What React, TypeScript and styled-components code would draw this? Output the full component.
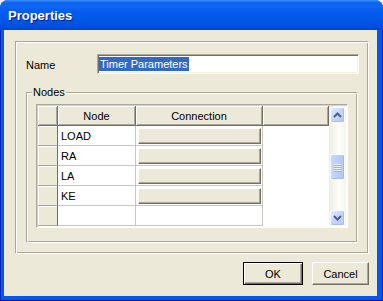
import React from 'react';
import styled, { createGlobalStyle } from 'styled-components';

const GlobalStyle = createGlobalStyle`
  html, body {
    margin: 0;
    padding: 0;
    background: #f4f1e2;
  }
  body {
    font-family: 'Liberation Sans', Arial, sans-serif;
    font-size: 11px;
    color: #000;
  }
  * {
    box-sizing: border-box;
  }
`;

const Window = styled.div`
  width: 383px;
  height: 301px;
  display: flex;
  flex-direction: column;
  background: #0554e6;
  border-radius: 8px 8px 0 0;
  overflow: hidden;
`;

const TitleBar = styled.div`
  height: 30px;
  flex: none;
  display: flex;
  align-items: center;
  padding: 1px 0 0 8px;
  background: linear-gradient(
    to bottom,
    #3d8ff8 0,
    #0a62ec 3px,
    #0f67f4 6px,
    #035cee 12px,
    #0057e8 20px,
    #0050de 26px,
    #0246cf 30px
  );
  color: #fff;
  font-weight: bold;
  font-size: 13px;
  text-shadow: 1px 1px 0 #0a1a8a;
`;

const Frame = styled.div`
  flex: 1;
  display: flex;
  padding: 0 6px 5px 4px;
  background: #0657ea;
  box-shadow: inset 1px 0 0 #0027b8, inset -1px 0 0 #0027b8, inset 0 -1px 0 #00138c;
`;

const Body = styled.div`
  flex: 1;
  display: flex;
  flex-direction: column;
  background: #ece9d8;
  padding: 11px 8px 11px 11px;
`;

const Etched = styled.div`
  border: 1px solid;
  border-color: #aca899 #fff #fff #aca899;
  box-shadow: inset 1px 1px 0 #fff, inset -1px -1px 0 #aca899;
`;

const Panel = styled(Etched)`
  width: 354px;
  height: 213px;
  padding: 12px 0 0 10px;
`;

const NameRow = styled.div`
  display: flex;
  align-items: center;
  height: 20px;
`;

const Label = styled.span`
  width: 71px;
  padding-top: 1px;
`;

const TextBox = styled.div`
  width: 262px;
  height: 20px;
  display: flex;
  align-items: center;
  background: #fff;
  border: 1px solid;
  border-color: #aca899 #fff #fff #aca899;
  box-shadow: inset 1px 1px 0 #716f64, inset -1px -1px 0 #f1efe2;
  padding-left: 1px;
`;

const Selected = styled.span`
  background: #316ac5;
  color: #fff;
  line-height: 14px;
  padding: 0 1px;
`;

const GroupBox = styled(Etched)`
  width: 332px;
  height: 151px;
  margin-top: 18px;
  padding-left: 9px;
`;

const GroupCaption = styled.div`
  width: fit-content;
  margin: -7px 0 0 -4px;
  padding: 0 1px;
  line-height: 13px;
  background: #ece9d8;
`;

const Grid = styled.div`
  width: 312px;
  height: 124px;
  margin-top: 5px;
  display: flex;
  background: #fff;
  border: 1px solid;
  border-color: #aca899 #fff #fff #aca899;
  box-shadow: inset 1px 1px 0 #d6d2c2;
  padding: 1px 1px 1px 1px;
`;

const Table = styled.div`
  display: grid;
  grid-template-columns: 20px 78px 127px 66px;
  grid-template-rows: repeat(6, 20px);
`;

const HeadCell = styled.div`
  display: flex;
  align-items: center;
  justify-content: center;
  background: #ece9d8;
  border-right: 1px solid #716f64;
  border-bottom: 1px solid #716f64;
  box-shadow: inset 1px 1px 0 #fff, inset -1px -1px 0 #aca899;
`;

const RowHead = styled.div`
  background: #ece9d8;
  border-right: 1px solid #716f64;
  border-bottom: 1px solid #aca899;
  box-shadow: inset 1px 1px 0 #fff;
`;

const Cell = styled.div`
  display: flex;
  align-items: center;
  padding-left: 3px;
  background: #fff;
  border-right: 1px solid #c9c7ba;
  border-bottom: 1px solid #c9c7ba;
`;

const ButtonCell = styled.div`
  padding: 2px 1px 1px 2px;
  background: #fff;
  border-right: 1px solid #c9c7ba;
  border-bottom: 1px solid #c9c7ba;
`;

const CellButton = styled.div`
  height: 100%;
  background: #ece9d8;
  border: 1px solid;
  border-color: #fff #716f64 #716f64 #fff;
  box-shadow: inset -1px -1px 0 #aca899;
`;

const Filler = styled.div`
  grid-column: 4;
  grid-row: 2 / span 5;
  background: #fff;
`;

const ScrollBar = styled.div`
  width: 17px;
  display: flex;
  flex-direction: column;
  padding: 1px 0 0 1px;
  background: linear-gradient(to right, #eeede5, #fdfdfa 60%, #f5f4ee);
`;

const ScrollButton = styled.div`
  width: 15px;
  height: 16px;
  flex: none;
  display: flex;
  align-items: center;
  justify-content: center;
  border: 1px solid #fbfcff;
  border-radius: 2px;
  background: linear-gradient(135deg, #e3ecfe 0%, #c6d7fc 45%, #b5c9f6 100%);
  box-shadow: inset -1px -1px 0 #a8bdf0;
`;

const Track = styled.div`
  flex: 1;
  display: flex;
  flex-direction: column;
`;

const Thumb = styled.div<{ $offset: number }>`
  width: 15px;
  height: 26px;
  margin-top: ${(p) => p.$offset}px;
  display: flex;
  flex-direction: column;
  align-items: center;
  justify-content: center;
  gap: 1px;
  border: 1px solid #fbfcff;
  border-radius: 2px;
  background: linear-gradient(to right, #c9dafd 0%, #bccffb 50%, #b2c7f7 100%);
  box-shadow: inset -1px -1px 0 #a3b9ee;
`;

const Grip = styled.div`
  width: 7px;
  height: 1px;
  background: #eef4fe;
  box-shadow: 0 1px 0 #8cb0f8;
`;

const ButtonRow = styled.div`
  display: flex;
  justify-content: flex-end;
  gap: 9px;
  margin-top: 8px;
`;

const DialogButton = styled.div<{ $default?: boolean; $width: number }>`
  width: ${(p) => p.$width}px;
  height: 23px;
  display: flex;
  align-items: center;
  justify-content: center;
  background: #ece9d8;
  border: 1px solid;
  border-color: ${(p) => (p.$default ? '#000' : '#fff #716f64 #716f64 #fff')};
  box-shadow: ${(p) =>
    p.$default
      ? 'inset 1px 1px 0 #fff, inset -1px -1px 0 #716f64, inset -2px -2px 0 #aca899'
      : 'inset -1px -1px 0 #aca899'};
`;

const Chevron = ({ down }: { down?: boolean }) => (
  <svg width="9" height="6" viewBox="0 0 9 6">
    <polyline
      points={down ? '1,1 4.5,4.5 8,1' : '1,5 4.5,1.5 8,5'}
      fill="none"
      stroke="#4d6185"
      strokeWidth="2"
    />
  </svg>
);

const nodes = ['LOAD', 'RA', 'LA', 'KE'];

export default function App() {
  return (
    <>
      <GlobalStyle />
      <Window>
        <TitleBar>Properties</TitleBar>
        <Frame>
          <Body>
            <Panel>
              <NameRow>
                <Label>Name</Label>
                <TextBox>
                  <Selected>Timer Parameters</Selected>
                </TextBox>
              </NameRow>
              <GroupBox>
                <GroupCaption>Nodes</GroupCaption>
                <Grid>
                  <Table>
                    <HeadCell />
                    <HeadCell>Node</HeadCell>
                    <HeadCell>Connection</HeadCell>
                    <HeadCell />
                    {nodes.map((n, i) => (
                      <React.Fragment key={n}>
                        <RowHead style={{ gridRow: i + 2, gridColumn: 1 }} />
                        <Cell style={{ gridRow: i + 2, gridColumn: 2 }}>{n}</Cell>
                        <ButtonCell style={{ gridRow: i + 2, gridColumn: 3 }}>
                          <CellButton />
                        </ButtonCell>
                      </React.Fragment>
                    ))}
                    <RowHead style={{ gridRow: 6, gridColumn: 1 }} />
                    <Cell style={{ gridRow: 6, gridColumn: 2 }} />
                    <Cell style={{ gridRow: 6, gridColumn: 3 }} />
                    <Filler />
                  </Table>
                  <ScrollBar>
                    <ScrollButton>
                      <Chevron />
                    </ScrollButton>
                    <Track>
                      <Thumb $offset={31}>
                        <Grip />
                        <Grip />
                        <Grip />
                        <Grip />
                      </Thumb>
                    </Track>
                    <ScrollButton>
                      <Chevron down />
                    </ScrollButton>
                  </ScrollBar>
                </Grid>
              </GroupBox>
            </Panel>
            <ButtonRow>
              <DialogButton $default $width={60}>OK</DialogButton>
              <DialogButton $width={57}>Cancel</DialogButton>
            </ButtonRow>
          </Body>
        </Frame>
      </Window>
    </>
  );
}
